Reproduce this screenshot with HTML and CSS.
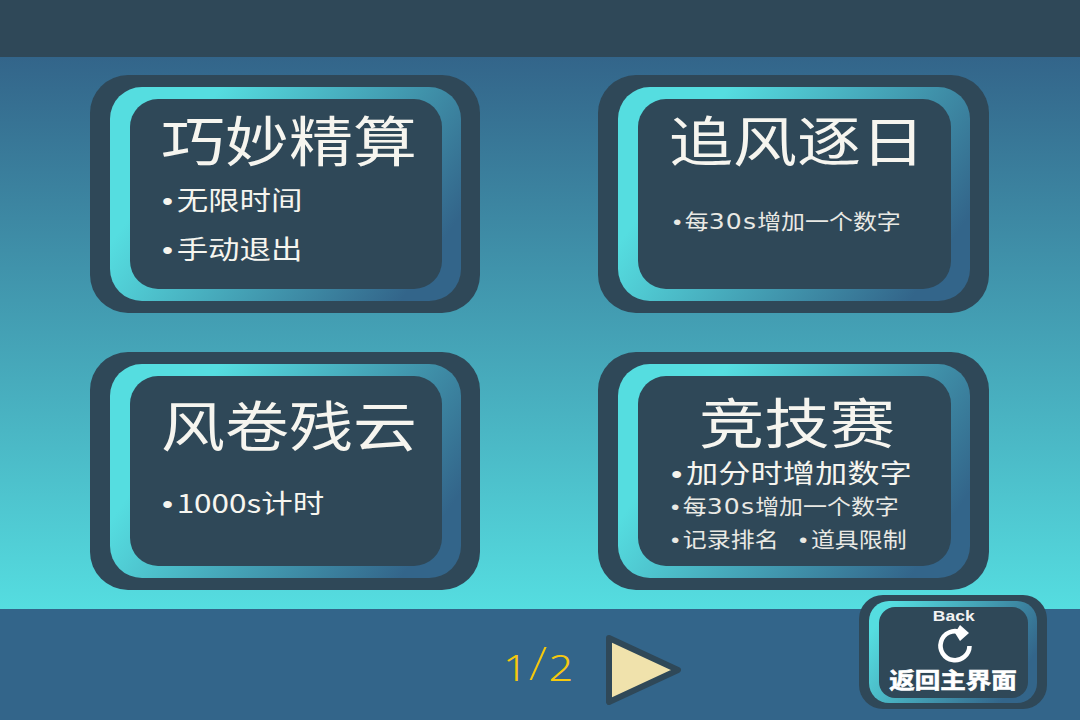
FILE: index.html
```html
<!DOCTYPE html>
<html lang="zh">
<head>
<meta charset="utf-8">
<title>模式选择</title>
<link rel="stylesheet" href="styles.css">
</head>
<body>
<div class="app">
  <header class="topbar"></header>
  <main class="modes">
    <section class="card"><div class="ring"><div class="panel panel-a">
      <h2 class="title">巧妙精算</h2>
      <p class="line mid gap-a"><span class="dot">•</span>无限时间</p>
      <p class="line mid"><span class="dot">•</span>手动退出</p>
    </div></div></section>
    <section class="card"><div class="ring"><div class="panel panel-b">
      <h2 class="title">追风逐日</h2>
      <p class="line small gap-b"><span class="dot">•</span>每<span class="num">30s</span>增加一个数字</p>
    </div></div></section>
    <section class="card"><div class="ring"><div class="panel panel-c">
      <h2 class="title">风卷残云</h2>
      <p class="line mid gap-c"><span class="dot">•</span>1000s计时</p>
    </div></div></section>
    <section class="card"><div class="ring"><div class="panel panel-d">
      <h2 class="title">竞技赛</h2>
      <div class="list">
        <p class="line mid tight"><span class="dot">•</span>加分时增加数字</p>
        <p class="line small tight"><span class="dot">•</span>每<span class="num">30s</span>增加一个数字</p>
        <p class="line small tight"><span class="dot">•</span>记录排名<span class="dot spaced">•</span>道具限制</p>
      </div>
    </div></div></section>
  </main>
  <footer class="bottombar">
    <span class="pager">1<span class="slash">/</span>2</span>
    <svg class="next" viewBox="0 0 78 72" width="78" height="72" aria-hidden="true">
      <polygon points="4,4 73,36 4,68" fill="#f0e2ac" stroke="#2f4858" stroke-width="6" stroke-linejoin="round"/>
    </svg>
  </footer>
  <div class="back"><div class="back-ring"><div class="back-panel">
    <span class="back-en">Back</span>
    <svg class="back-icon" viewBox="0 0 40 40" width="40" height="40" aria-hidden="true">
      <path d="M26 7.5 A14.5 14.5 0 1 0 34.5 21" fill="none" stroke="#fff" stroke-width="4.6"/>
      <polygon points="25,0 34,8 25,16 20,8" fill="#fff"/>
    </svg>
    <span class="back-cn">返回主界面</span>
  </div></div></div>
</div>
</body>
</html>
```
FILE: styles.css
```css
* { box-sizing: border-box; margin: 0; padding: 0; }
html, body { width: 1080px; height: 720px; overflow: hidden; }
body { font-family: "Noto Sans CJK SC", "Liberation Sans", sans-serif; color: #f6f5ef; }
.app { position: relative; width: 1080px; height: 720px; display: flex; flex-direction: column; }
.topbar { height: 57px; background: #2f4858; }
.modes {
  height: 552px;
  padding: 18px 91px 0 90px;
  display: grid;
  grid-template-columns: 390px 391px;
  grid-template-rows: 238px 238px;
  column-gap: 118px;
  row-gap: 39px;
  background: linear-gradient(180deg, #33658a 0%, #55dde0 100%);
}
.card { background: #2f4858; border-radius: 38px; padding: 12px 19px 12px 20px; }
.ring { height: 100%; background: linear-gradient(125deg, #55dde0 22%, #33658a 88%); border-radius: 32px; padding: 12px 19px 12px 20px; }
.panel { height: 100%; background: #2f4858; border-radius: 28px; display: flex; flex-direction: column; }
.panel-a { padding: 12px 0 0 32px; }
.panel-b { padding: 12px 0 0 35px; }
.panel-c { padding: 20px 0 0 32px; }
.panel-d { padding: 17px 0 0 33px; }
.title { font-size: 54px; line-height: 56px; height: 60px; font-weight: 400; white-space: nowrap; transform: scaleX(1.185); transform-origin: left; width: max-content; margin-left: -1px; }
.panel-b .title { align-self: center; margin-left: -30px; transform-origin: center; }
.panel-d .title { align-self: center; margin-left: -28px; transform-origin: center; transform: scaleX(1.21); }
.line { white-space: nowrap; transform-origin: left; width: max-content; }
.dot { font-family: "Liberation Sans", sans-serif; margin-right: 3px; line-height: 0; }
.num { font-family: "DejaVu Sans", sans-serif; font-size: 22px; letter-spacing: 1px; line-height: 0; }
.mid { font-size: 26px; line-height: 49px; height: 49px; transform: scaleX(1.21); }
.small { font-size: 21px; line-height: 33px; height: 33px; transform: scaleX(1.14); color: #e9e9e4; }
.tight.mid { line-height: 34px; height: 34px; transform: scaleX(1.24); }
.gap-a { margin-top: 3px; }
.gap-b { margin-top: 33px; }
.gap-c { margin-top: 21px; }
.list { margin-top: 2px; display: flex; flex-direction: column; }
.dot.spaced { margin-left: 18px; }
.bottombar { height: 111px; background: #33658a; display: flex; align-items: center; padding-left: 503px; padding-top: 6px; gap: 33px; }
.pager { font-family: "Noto Sans", sans-serif; font-weight: 300; font-size: 36px; line-height: 44px; color: #f6c90e; letter-spacing: 1px; width: 69px; transform: scaleX(1.2); transform-origin: left; white-space: nowrap; }
.slash { font-size: 46px; line-height: 0; font-weight: 200; vertical-align: 1px; }
.next { flex: none; margin-top: 5px; }
.back { position: absolute; left: 859px; top: 595px; width: 188px; height: 114px; background: #2f4858; border-radius: 24px; padding: 6px 10px; }
.back-ring { height: 100%; background: linear-gradient(125deg, #55dde0 10%, #33658a 85%); border-radius: 20px; padding: 6px 9px 5px 10px; }
.back-panel { height: 100%; background: #2f4858; border-radius: 16px; display: flex; flex-direction: column; align-items: center; }
.back-en { font-family: "Liberation Sans", sans-serif; font-weight: 700; font-size: 14px; line-height: 16px; margin-top: 1px; color: #f3f3f3; transform: scaleX(1.25); }
.back-icon { display: block; margin-top: 1px; margin-left: 3px; }
.back-cn { font-size: 22px; font-weight: 700; line-height: 26px; color: #fff; transform: scaleX(1.16); margin-top: 0; -webkit-text-stroke: 0.6px #fff; }
```
